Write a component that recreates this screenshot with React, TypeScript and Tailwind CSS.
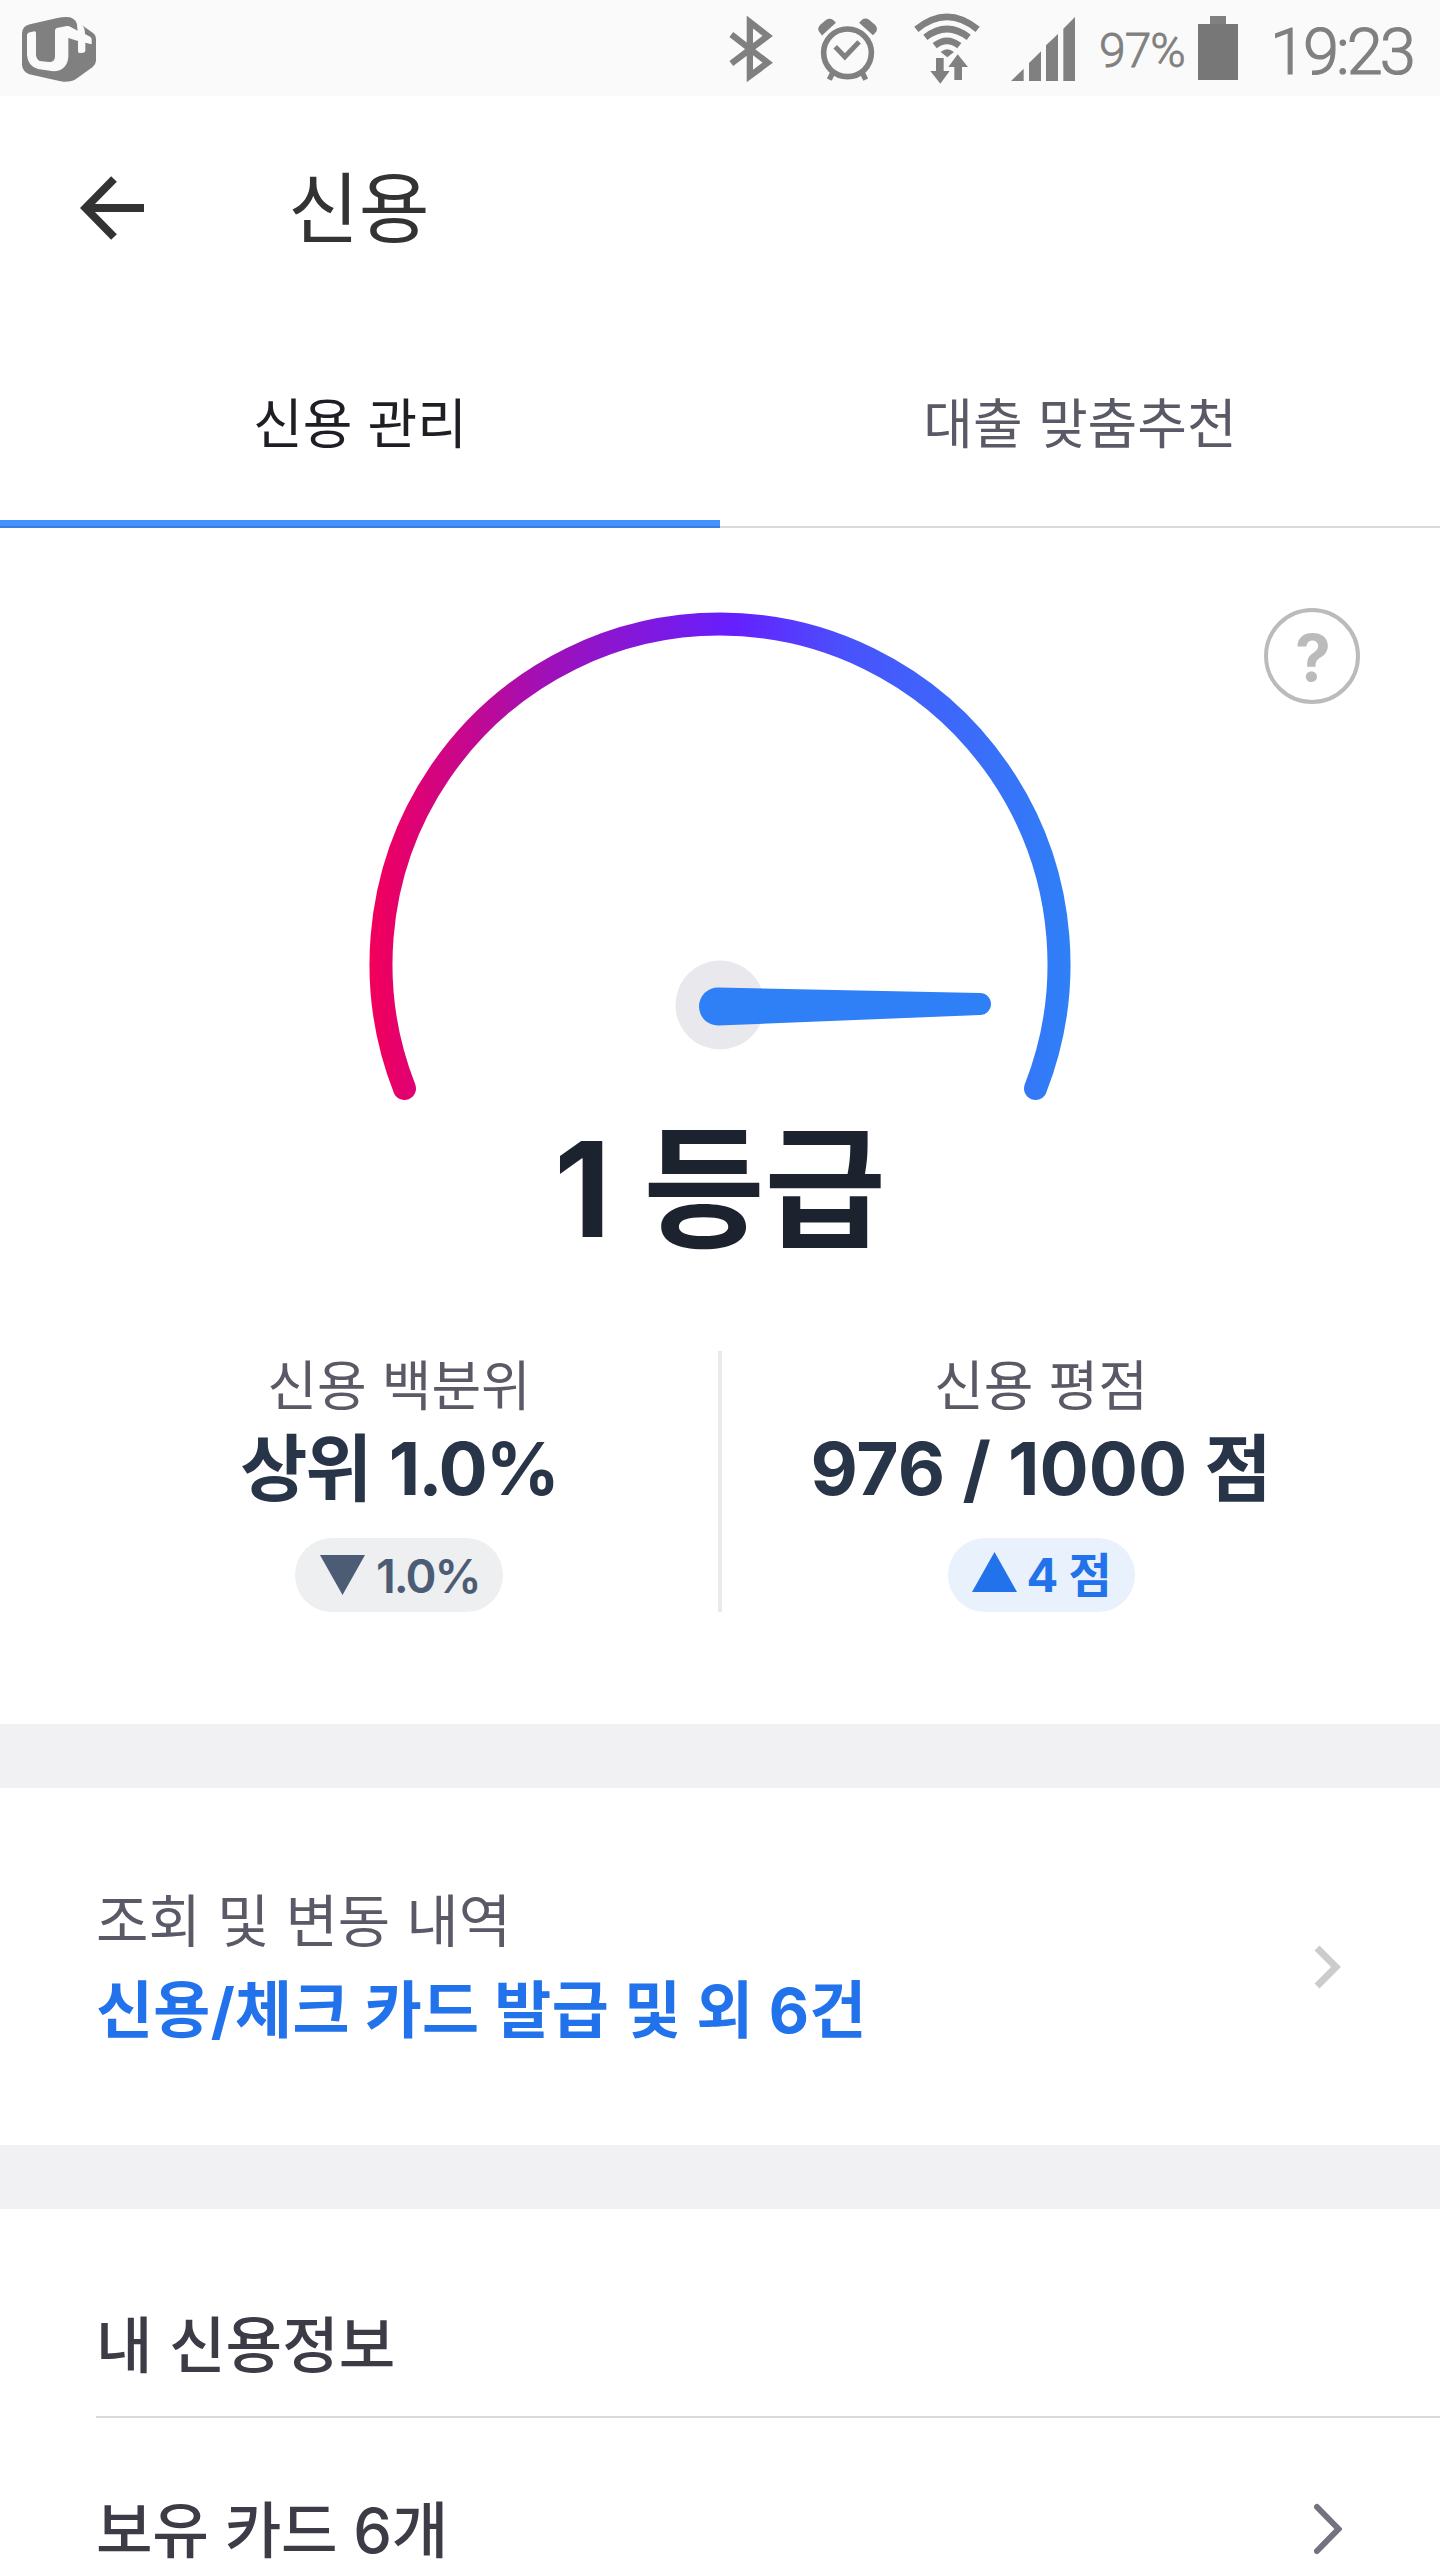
import type { ReactNode } from 'react';
import clsx from 'clsx';

const TABS = [
  { label: '신용 관리', active: true },
  { label: '대출 맞춤추천', active: false },
];

function CarrierLogo() {
  return (
    <svg viewBox="66 51 222 195" className="h-[65px] w-[74px]">
      <path
        fill="#808080"
        d="M66 100Q67 78 90 73L172 54Q190 50 210 52Q231 58 232 82L234 92L244 74L278 98Q288 105 288 118V182Q287 194 278 201L228 237Q215 246 190 245Q178 244 168 241L88 223Q68 215 66 196Z"
      />
      <path
        fill="#fafafa"
        d="M81 104Q82 98 90 97L104 94Q108 94 108 99V164Q109 182 124 184L148 186Q164 186 165 170V92Q165 84 174 83L200 78Q206 77 212 81L233 92V68L246 74Q255 84 255 102L270 110Q275 112 275 118V133L256 128V152Q256 157 250 158L238 159Q234 159 234 154V123L205 114V170Q202 211 160 214L114 207Q84 200 81 166Z"
      />
    </svg>
  );
}

function BluetoothIcon() {
  return (
    <svg viewBox="86 47 133 199" className="h-[66px] w-[44px]" fill="none" stroke="#808080" strokeWidth="19">
      <path d="M93 103L203 188L149 228V65L203 107L93 190" strokeMiterlimit="10" />
    </svg>
  );
}

function AlarmIcon() {
  return (
    <svg viewBox="354 53 178 190" className="h-[63px] w-[59px]" fill="none" stroke="#808080">
      <circle cx="443" cy="158" r="72" strokeWidth="17" />
      <path d="M406 140L435 170L478 125" strokeWidth="15" />
      <path d="M398 219L388 239M488 219L498 239" strokeWidth="16" />
      <path
        fill="#808080"
        stroke="none"
        d="M366 106L408 67L400 59Q390 52 379 58L361 73Q351 83 357 94ZM520 105L478 67L487 58Q497 51 508 58L526 73Q535 82 530 94Z"
      />
    </svg>
  );
}

function WifiIcon() {
  return (
    <svg viewBox="642 39 198 213" className="h-[71px] w-[66px]" fill="none" stroke="#808080" strokeWidth="20">
      <path d="M649 88Q741 13 833 88" />
      <path d="M676 112Q741 62 806 112" />
      <path d="M704 137Q741 108 778 137" />
      <path fill="#808080" stroke="none" d="M722 156Q741 140 762 156L742 172Z" />
      <path fill="#808080" stroke="none" d="M708 174H731V213H749L721 251L691 213H708ZM763 240V201H745L773 163L804 201H786V240Z" />
    </svg>
  );
}

function SignalIcon() {
  return (
    <svg viewBox="933 51 192 192" className="h-16 w-16" fill="#808080">
      <path d="M933 243L971 206V243ZM987 243V189L1023 154V243ZM1038 243V136L1074 102V243ZM1090 243V86L1125 51V243Z" />
    </svg>
  );
}

function StatusBar() {
  return (
    <div className="flex h-24 bg-[#fafafa] pl-[22px] font-['Roboto',sans-serif] font-light text-[#808080]">
      <div className="pt-[17px]">
        <CarrierLogo />
      </div>
      <div className="ml-[633px] pt-4">
        <BluetoothIcon />
      </div>
      <div className="ml-[45px] pt-[18px]">
        <AlarmIcon />
      </div>
      <div className="ml-[37px] pt-[13px]">
        <WifiIcon />
      </div>
      <div className="ml-[31px] pt-[17px]">
        <SignalIcon />
      </div>
      <span className="ml-6 w-[99px] pt-[26px] text-[48px] leading-[50px] tracking-[-1px] [-webkit-text-stroke:0.8px_#808080]">97%</span>
      <div className="flex w-10 flex-col items-center pt-4">
        <div className="h-2 w-4 bg-[#808080]" />
        <div className="h-14 w-10 bg-[#777777]" />
      </div>
      <span className="ml-8 pt-[17px] text-[65px] leading-[70px] tracking-[-3px] [-webkit-text-stroke:1.2px_#808080]">19:23</span>
    </div>
  );
}

function Gauge() {
  return (
    <svg viewBox="370 612 700 498" className="mx-auto h-[498px] w-[700px] overflow-visible">
      <defs>
        <linearGradient id="gauge" gradientUnits="userSpaceOnUse" x1="370" y1="0" x2="1070" y2="0">
          <stop offset="0" stopColor="#f2005a" />
          <stop offset="0.04" stopColor="#e6006b" />
          <stop offset="0.25" stopColor="#a010b7" />
          <stop offset="0.52" stopColor="#651fff" />
          <stop offset="0.68" stopColor="#4952fc" />
          <stop offset="1" stopColor="#2f80f7" />
        </linearGradient>
      </defs>
      <path
        d="M404.5 1088.5A339 340 0 1 1 1035.5 1088.5"
        fill="none"
        stroke="url(#gauge)"
        strokeWidth="23"
        strokeLinecap="round"
      />
      <circle cx="720" cy="1005" r="44.5" fill="#e8e8ed" />
      <path
        fill="#2f80f7"
        d="M718 987.5L980 993A11 11 0 0 1 980 1015L718 1025.5A19 19 0 0 1 718 987.5Z"
      />
    </svg>
  );
}

interface StatProps {
  label: string;
  value: string;
  badge: ReactNode;
  tight?: boolean;
}

function Stat({ label, value, badge, tight }: StatProps) {
  return (
    <div className="flex w-[638px] flex-col items-center whitespace-nowrap">
      <div className="mt-[5px] h-[62px] text-[54px] leading-[62px] text-[#5a5966]">{label}</div>
      <div
        className={clsx(
          'mt-[7px] h-[88px] text-[73px] leading-[88px] font-bold text-[#283447]',
          tight ? 'tracking-[-2px] [word-spacing:3px]' : 'tracking-normal',
        )}
      >
        {value}
      </div>
      <div className="mt-[25px]">{badge}</div>
    </div>
  );
}

function Chevron({ muted }: { muted?: boolean }) {
  return muted ? (
    <svg viewBox="0 0 28 44" className="h-11 w-7" fill="none" stroke="#cccccc" strokeWidth="7">
      <path d="M3 3L22 22L3 41" />
    </svg>
  ) : (
    <svg viewBox="0 0 28 52" className="h-[52px] w-7" fill="none" stroke="#737380" strokeWidth="6">
      <path d="M3 4L24.5 26L3 48" strokeLinecap="round" />
    </svg>
  );
}

export default function App() {
  return (
    <div className="h-[2560px] w-[1440px] overflow-hidden bg-white font-['Inter','Noto_Sans_CJK_KR',sans-serif]">
      <StatusBar />

      {/* Header */}
      <header className="flex h-[224px] pl-20 text-[#333333]">
        <svg viewBox="0 0 64 64" className="mt-20 h-16 w-16" fill="none" stroke="currentColor" strokeWidth="8">
          <path d="M34 3L5.5 32L34 61M5 32H64" />
        </svg>
        <h1 className="mt-[63px] ml-[144px] text-[77px] leading-[100px]">신용</h1>
      </header>

      {/* Tabs */}
      <nav className="grid h-[208px] grid-cols-2 text-center text-[54px] leading-[200px]">
        {TABS.map((t) => (
          <div
            key={t.label}
            className={clsx(
              'flex h-[208px] flex-col',
              t.active ? 'text-[#1e1e24]' : 'text-[#5a5966]',
            )}
          >
            <span className="h-[200px] pt-[5px]">{t.label}</span>
            <div className={clsx('h-1.5', t.active && 'bg-[#4492ff]')} />
            <div className={clsx('h-0.5', t.active ? 'bg-[#387ee0]' : 'bg-[#d8d8dd]')} />
          </div>
        ))}
      </nav>

      {/* Credit grade */}
      <section className="relative h-[1196px] pt-[84px]">
        <button className="absolute top-20 right-20 flex h-24 w-24 items-center justify-center rounded-full border-4 border-[#bbbbbb] pt-[3px] pl-0.5 text-[64px] leading-none font-bold text-[#bbbbbb]">
          ?
        </button>
        <Gauge />
        <h2 className="h-[149px] pt-[9px] text-center text-[132px] leading-[140px] font-bold text-[#1c222e] [word-spacing:1px]">1 등급</h2>
        <div className="mt-[92px] flex h-[261px] justify-center">
          <Stat
            label="신용 백분위"
            value="상위 1.0%"
            tight
            badge={
              <div className="flex h-[74px] w-[208px] items-center rounded-full bg-[#edeff1] pl-[25px] text-[47px] leading-[47px] font-semibold tracking-[-2px] text-[#4c5c75]">
                <svg viewBox="0 0 45 40" className="mr-[11px] h-10 w-[45px]" fill="currentColor">
                  <path d="M0 0H45L22.5 40Z" />
                </svg>
                1.0%
              </div>
            }
          />
          <div className="w-1 bg-[#e8e8ed]" />
          <Stat
            label="신용 평점"
            value="976 / 1000 점"
            badge={
              <div className="flex h-[74px] w-[187px] items-center rounded-full bg-[#e9f1fd] pl-6 text-[47px] leading-[47px] font-bold tracking-[-0.5px] text-[#2172eb]">
                <svg viewBox="0 0 45 40" className="mr-2.5 mb-1.5 h-10 w-[45px]" fill="currentColor">
                  <path d="M0 40H45L22.5 0Z" />
                </svg>
                <span className="mb-0.5 h-[47px]">4 점</span>
              </div>
            }
          />
        </div>
      </section>

      <div className="h-16 bg-[#f1f1f4]" />

      {/* History */}
      <section className="flex h-[357px] items-start justify-between pr-[98px] pl-24 whitespace-nowrap">
        <div className="pt-[98px]">
          <div className="h-[72px] text-[57px] leading-[72px] text-[#5a5966]">조회 및 변동 내역</div>
          <div className="mt-[13px] h-20 text-[62px] leading-[80px] font-bold tracking-[0.3px] text-[#2172eb]">신용/체크 카드 발급 및 외 6건</div>
        </div>
        <div className="pt-[157px]">
          <Chevron muted />
        </div>
      </section>

      <div className="h-16 bg-[#f1f1f4]" />

      {/* My credit info */}
      <section className="pl-24 text-[61.5px] leading-[80px] font-medium text-[#3c3b46]">
        <h3 className="h-[207px] pt-[97px]">내 신용정보</h3>
        <div className="flex h-[144px] items-start justify-between border-t-2 border-[#d8d8dd] pt-[69px] pr-[98px]">
          <span className="pt-1 tracking-[-0.3px]">보유 카드 6개</span>
          <div className="pt-[16px]">
            <Chevron />
          </div>
        </div>
      </section>
    </div>
  );
}
